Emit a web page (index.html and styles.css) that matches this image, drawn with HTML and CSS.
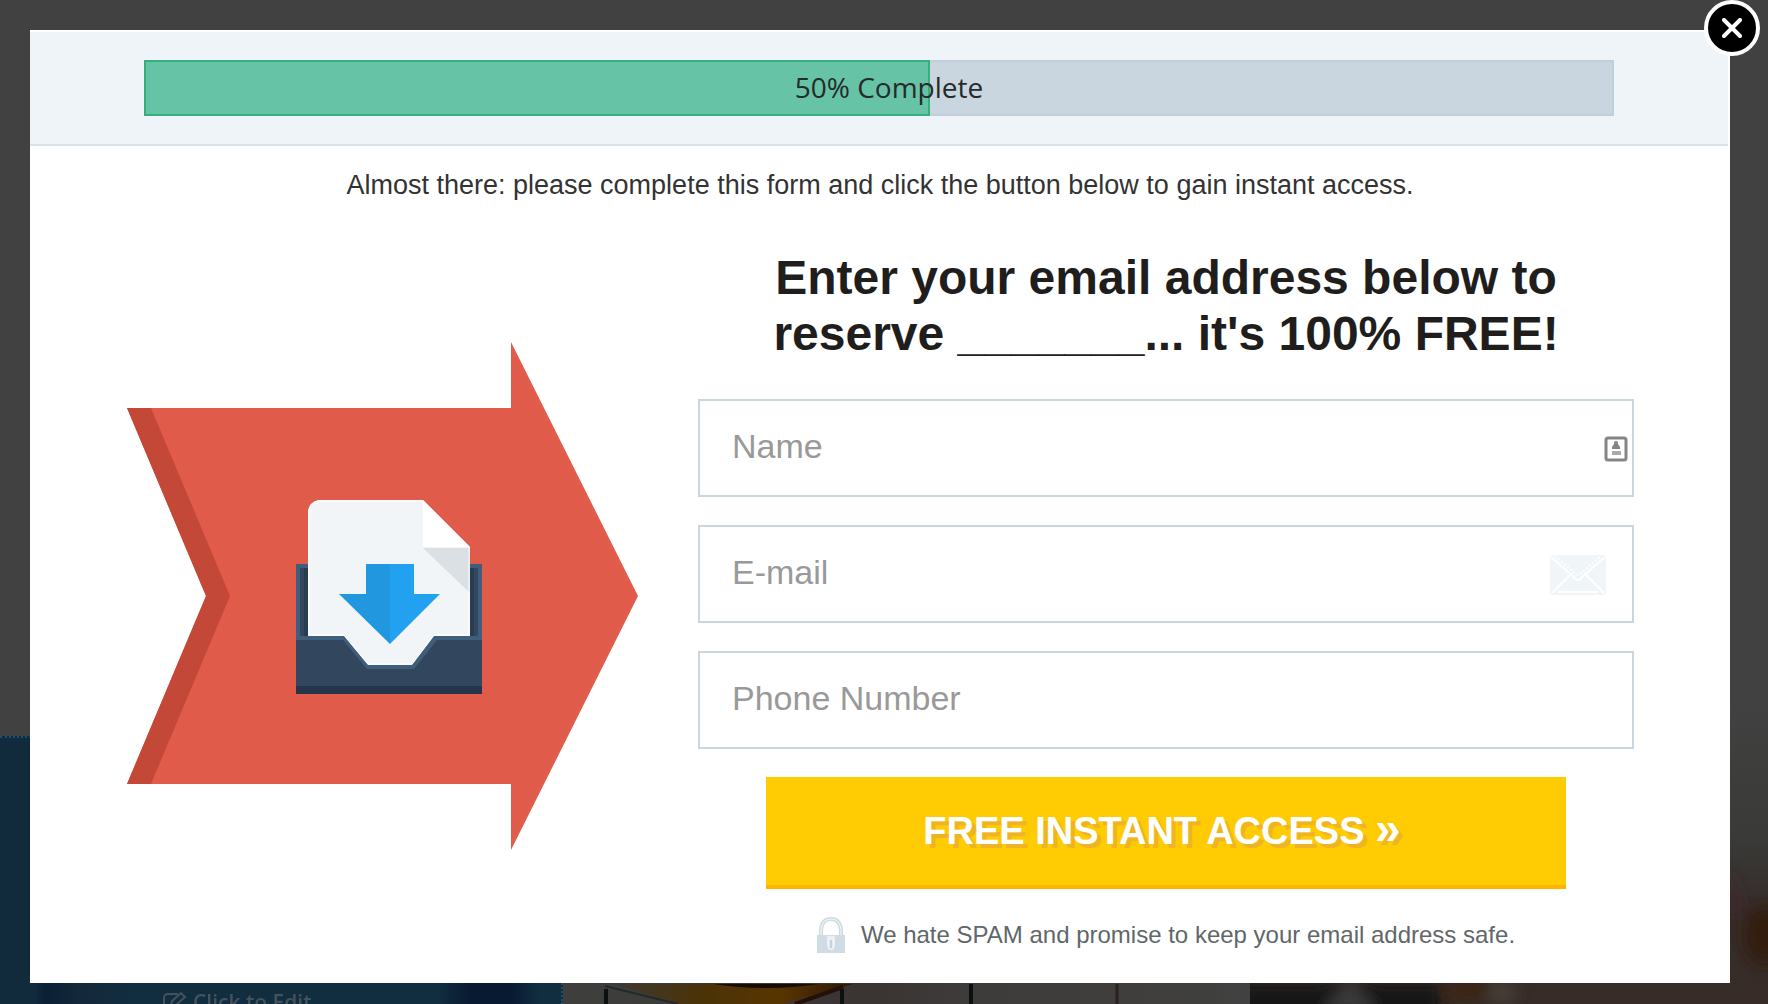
FILE: index.html
```html
<!DOCTYPE html>
<html lang="en">
<head>
<meta charset="utf-8">
<meta name="viewport" content="width=device-width, initial-scale=1">
<title>Free Instant Access</title>
<link rel="stylesheet" href="styles.css">
</head>
<body>
<div class="backdrop" aria-hidden="true">
  <div class="tile tile-blue">
    <span class="edit-hint">
      <svg class="edit-icon" viewBox="0 0 24 22" fill="none" stroke="currentColor" stroke-width="2"><path d="M15 3H5a4 4 0 0 0-4 4v10a4 4 0 0 0 4 4h10a4 4 0 0 0 4-4v-3"/><path d="M8 15l1-5 9-8 4 4-9 8z"/></svg>
      Click to Edit
    </span>
  </div>
  <div class="tile tile-wood">
    <svg class="photo" viewBox="0 0 687 268" preserveAspectRatio="none">
      <defs>
        <linearGradient id="amber" x1="0" x2="1"><stop offset="0" stop-color="#3e3935"/><stop offset=".35" stop-color="#4a3308"/><stop offset=".7" stop-color="#583500"/><stop offset="1" stop-color="#2c1608"/></linearGradient>
        <linearGradient id="planks" x1="0" x2="1"><stop offset="0" stop-color="#3e3f3d"/><stop offset=".45" stop-color="#3a3432"/><stop offset=".6" stop-color="#3e3c3b"/><stop offset="1" stop-color="#40403e"/></linearGradient>
      </defs>
      <rect width="687" height="268" fill="url(#planks)"/>
      <path d="M50 248H290L220 268H115z" fill="url(#amber)"/>
      <path d="M150 248h105q-50 8-105 0z" fill="#180b03"/>
      <path d="M280 251L232 268" stroke="#23100a" stroke-width="4"/>
      <path d="M42 250L115 268" stroke="#20292b" stroke-width="2"/>
      <path d="M43 253v15M279 253v15M408 248v20" stroke="#0b1010" stroke-width="4"/>
      <path d="M554 248v20" stroke="#2b201c" stroke-width="3"/>
      <path d="M661 248h26v20h-26z" fill="#414141"/>
    </svg>
  </div>
  <div class="tile tile-photo">
    <svg class="photo" viewBox="0 0 518 304" preserveAspectRatio="none">
      <defs>
        <linearGradient id="room" x2="0" y2="1"><stop offset="0" stop-color="#414141"/><stop offset=".45" stop-color="#3a3a38"/><stop offset=".7" stop-color="#352c29"/><stop offset="1" stop-color="#372c27"/></linearGradient>
        <filter id="soft"><feGaussianBlur stdDeviation="7"/></filter>
      </defs>
      <rect width="518" height="304" fill="url(#room)"/>
      <g filter="url(#soft)">
        <ellipse cx="514" cy="235" rx="20" ry="30" fill="#301a11"/>
        <path d="M480 165l12 45-12 5z" fill="#43262a"/>
        <path d="M-20 284H190V330H-20z" fill="#171719"/>
        <path d="M70 310l30-28 30 28z" fill="#3a3a3b"/>
        <ellipse cx="220" cy="289" rx="30" ry="8" fill="#3d220f"/>
        <ellipse cx="252" cy="293" rx="15" ry="12" fill="#453e38"/>
      </g>
    </svg>
  </div>
</div>

<main class="modal" role="dialog" aria-label="Reserve your access">
  <button class="close" type="button" aria-label="Close">
    <svg viewBox="0 0 20 20" width="20" height="20" stroke="#fff" stroke-width="4" stroke-linecap="round"><path d="M2 2L18 18M18 2L2 18"/></svg>
  </button>
  <header class="modal-header">
    <div class="progress" role="progressbar" aria-valuenow="50" aria-valuemin="0" aria-valuemax="100" aria-label="Form progress">
      <div class="progress-fill"></div>
      <span class="progress-label">50% Complete</span>
    </div>
  </header>
  <div class="modal-body">
    <p class="intro">Almost there: please complete this form and click the button below to gain instant access.</p>
    <div class="columns">
      <svg class="art" viewBox="0 0 512 508" aria-hidden="true">
        <path d="M1 66H385V0L512 254L385 508V442H1L80 254z" fill="#e15b4a"/>
        <path d="M1 66H25L104 254L25 442H1L80 254z" fill="#c34838"/>
        <path d="M170 222H356V352H170z" fill="#3f5e7b"/>
        <path d="M174 226H352V298H174z" fill="#32475d"/>
        <path d="M178 226h4v68h-4zM344 226h4v68h-4z" fill="#283c52"/>
        <path d="M170 294H356V352H170z" fill="#3f5e7b"/>
        <path d="M170 298H217L241 327H288L311 298H356V352H170z" fill="#32475d"/>
        <path d="M170 344H356V352H170z" fill="#25344a"/>
        <path d="M182 294V168Q184 160 192 158H297L344 205V294H308L286 323H242L218 294z" fill="#f1f5f8"/>
        <path d="M297 158L344 205H297z" fill="#fff"/>
        <path d="M297 206H344V251z" fill="#dae0e3"/>
        <path d="M183 294V168Q185 160 192 159H297M343 205V293H308L286 322H242L218 293H183" fill="none" stroke="#fff"/>
        <path d="M240 222H264V302L213 252H240z" fill="#2197df"/>
        <path d="M264 222H288V252H314L264 302z" fill="#21a1ef"/>
      </svg>
      <form class="form">
        <h1 class="title">Enter your email address below to<br>reserve _______... it's 100% FREE!</h1>
        <div class="field">
          <input class="input" type="text" name="name" placeholder="Name" aria-label="Name">
          <svg class="contact-icon" viewBox="0 0 24 26" aria-hidden="true"><rect x="2" y="2" width="20" height="22" rx="2" fill="#fff" stroke="#858585" stroke-width="3"/><circle cx="12" cy="7" r="2" fill="#858585"/><path d="M10 8h4l2 3v2H8v-2z" fill="#858585"/><path d="M8 15h9v4H8z" fill="#aaa"/></svg>
        </div>
        <div class="field">
          <input class="input" type="email" name="email" placeholder="E-mail" aria-label="E-mail">
          <svg class="mail-icon" viewBox="0 0 56 40" aria-hidden="true"><rect width="56" height="40" rx="3" fill="#f0f5f8"/><path d="M1 2L23 21Q28 29 33 21L55 2M2 38L20 20M54 38L36 20M8 37H48" fill="none" stroke="#fff" stroke-width="2"/><path d="M5 1L25 18Q28 22 31 18L51 1" fill="none" stroke="#fff" stroke-width="2" stroke-dasharray="2 2"/></svg>
        </div>
        <div class="field">
          <input class="input" type="tel" name="phone" placeholder="Phone Number" aria-label="Phone Number">
        </div>
        <button class="submit" type="submit">FREE INSTANT ACCESS <span class="chevrons">»</span></button>
        <p class="note">
          <svg class="lock" viewBox="0 0 28 36" aria-hidden="true"><path d="M4 18V13Q5 2 14 2T24 13V18" fill="none" stroke="#d0dce3" stroke-width="4"/><path d="M4 18V13Q5 2 14 2T24 13V18" fill="none" stroke="#f5f8fa"/><path d="M0 18h28v18H0z" fill="#d0dce3"/><path d="M10 19v7a4 7 0 0 0 8 0v-7z" fill="#e9f0f4"/><path d="M12 22h4v10h-4z" fill="#c5d3dc" stroke="#fff"/></svg>
          <span>We hate SPAM and promise to keep your email address safe.</span>
        </p>
      </form>
    </div>
  </div>
</main>
</body>
</html>
```
FILE: styles.css
```css
* { box-sizing: border-box; }

body {
  margin: 0;
  padding: 30px 38px 20px 30px;
  background: #414141;
  font-family: "Liberation Sans", Arial, sans-serif;
}

/* Dimmed page behind the dialog */
.backdrop {
  position: fixed;
  inset: 0;
  z-index: -1;
  overflow: hidden;
  display: grid;
  grid-template-columns: 563fr 687fr 518fr;
  align-items: end;
}
.tile { height: 268px; overflow: hidden; }
.tile-blue {
  display: flex;
  align-items: flex-end;
  padding-left: 163px;
  border: 2px dotted #214f6a;
  border-width: 2px 2px 0 0;
  background: linear-gradient(90deg, #112b3c 0 6%, #0b1f35 8%, #14283a 14%, #112d40 24% 78%, #081a31 84% 91%, #112d40 96%);
}
.edit-hint {
  display: flex;
  align-items: center;
  gap: 6px;
  height: 24px;
  margin-bottom: -10px;
  color: #46525a;
  font: 600 21px/24px "Open Sans", sans-serif;
}
.edit-icon { width: 24px; height: 22px; }
.tile-photo { height: 304px; }
.photo { display: block; width: 100%; height: 100%; }

.modal { position: relative; background: #fff; }

.close {
  position: absolute;
  top: -30px;
  right: -30px;
  display: grid;
  place-items: center;
  width: 56px;
  height: 56px;
  padding: 0;
  border: 4px solid #fff;
  border-radius: 50%;
  background: #000;
}

.modal-header {
  padding: 28px 114px 30px;
  border: solid #fff;
  border-width: 2px 2px 0 0;
  background: #eff4f8;
  box-shadow: inset 0 -2px #dae2e7;
}
.progress {
  display: grid;
  height: 56px;
  background: #cad6df;
  box-shadow: inset 0 0 0 2px #c1cfd9;
}
.progress-fill, .progress-label { grid-area: 1 / 1; }
.progress-fill {
  width: 53.5%;
  border: 2px solid #35b07a;
  background: #67c3a5;
}
.progress-label {
  padding-left: 20px;
  color: #262a2b;
  font: 28px/54px "Open Sans", sans-serif;
  text-align: center;
}

.modal-body { padding: 23px 96px 30px; }
.intro {
  margin: 0 0 49px;
  color: #333;
  font-size: 27px;
  line-height: 32px;
  text-align: center;
}
.columns {
  display: grid;
  grid-template-columns: 512fr 936fr;
  gap: 60px;
  align-items: center;
}
.art { display: block; width: 100%; margin-bottom: 12px; }

.form {
  display: flex;
  flex-direction: column;
  align-items: center;
  gap: 28px;
}
.title {
  margin: 0 0 9px;
  color: #1f1e1d;
  font-size: 48px;
  line-height: 56px;
  text-align: center;
}
.field { position: relative; width: 100%; }
.input {
  display: block;
  width: 100%;
  height: 98px;
  padding: 0 32px 4px;
  border: 2px solid #c9d6de;
  border-radius: 0;
  background: #fff;
  color: #333;
  font: 34px "Liberation Sans", Arial, sans-serif;
}
.input::placeholder { color: #999; opacity: 1; }
.contact-icon {
  position: absolute;
  top: 37px;
  right: 6px;
  width: 24px;
  height: 26px;
}
.mail-icon {
  position: absolute;
  top: 30px;
  right: 28px;
  width: 56px;
  height: 40px;
}
.submit {
  width: 100%;
  max-width: 800px;
  height: 112px;
  padding: 0 8px 0 0;
  border: 0;
  border-bottom: 4px solid #ffb400;
  background: #ffcc03;
  color: #fff;
  font: bold 38px "Liberation Sans", Arial, sans-serif;
  text-shadow: 4px 4px #efb425;
}
.chevrons { font-size: 46px; line-height: 38px; }
.note {
  display: flex;
  align-items: center;
  gap: 16px;
  margin: 0;
  color: #5f6769;
  font-size: 24px;
  line-height: 36px;
}
.lock { width: 28px; height: 36px; }
```
